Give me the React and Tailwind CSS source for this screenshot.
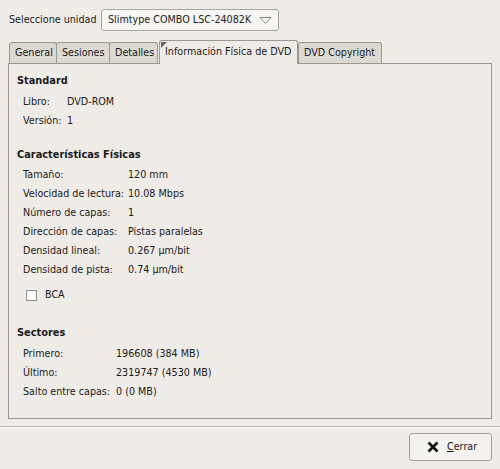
import React from "react";

const font = { fontFamily: '"DejaVu Sans", Verdana, sans-serif' };

function Row({ label, value, valueX, h = "h-[19px]" }) {
  return (
    <div className={`flex items-center ${h} pl-[6px] whitespace-nowrap`}>
      <span className="shrink-0" style={{ width: valueX }}>{label}</span>
      <span>{value}</span>
    </div>
  );
}

function Tab({ children, active, w }) {
  if (active) {
    return (
      <div className="relative z-10 -mb-px h-[24px] border border-b-0 border-[#9a9893] bg-[#efebe7] px-[5px] pt-[4px] rounded-t-[3px] ml-[2px] whitespace-nowrap" style={{ width: w }}>
        <span className="absolute left-[1px] top-[1px] h-0 w-0 border-l-[3px] border-t-[3px] border-l-[#666] border-t-[#666] border-r-[3px] border-b-[3px]" style={{ borderRightColor: "transparent", borderBottomColor: "transparent" }} />
        {children}
      </div>
    );
  }
  return (
    <div className="h-[21px] border border-b-0 border-[#9a9893] bg-[#dcd9d3] px-[5px] pt-[3px] rounded-t-[3px] -mr-px whitespace-nowrap" style={{ width: w }}>
      {children}
    </div>
  );
}

export default function App() {
  return (
    <div className="w-[500px] h-[469px] bg-[#efebe7] text-[9.6px] text-[#1a1a1a] flex flex-col" style={font}>
      <div className="flex items-center pl-[9px] pt-[9px] h-[31px] whitespace-nowrap">
        <span className="w-[92px]">Seleccione unidad</span>
        <div className="flex items-center justify-between w-[178px] h-[22px] rounded-[3px] border border-[#a7a5a0] bg-[#f7f6f4] pl-[6px] pr-[6px]">
          <span>Slimtype COMBO LSC-24082K</span>
          <svg width="13" height="9" viewBox="0 0 13 9">
            <path d="M1 1.5 L12 1.5 L6.5 7.5 Z" fill="none" stroke="#8a8884" strokeWidth="1" />
          </svg>
        </div>
      </div>
      <div className="flex items-end pl-[9px] mt-[8px] h-[24px]">
        <Tab w={48}>General</Tab>
        <Tab w={54}>Sesiones</Tab>
        <Tab w={49}>Detalles</Tab>
        <Tab active w={139}>Información Física de DVD</Tab>
        <Tab w={84}>DVD Copyright</Tab>
      </div>
      <div className="mx-[8px] h-[356px] border border-[#9a9893] px-[8px] pt-[10px]">
        <div className="font-bold text-[9.8px] h-[14px] flex items-center">Standard</div>
        <div className="mt-[5px]">
          <Row label="Libro:" value="DVD-ROM" valueX={44} />
          <Row label="Versión:" value="1" valueX={44} />
        </div>
        <div className="font-bold text-[9.8px] h-[14px] flex items-center mt-[17px]">Características Físicas</div>
        <div className="mt-[4px]">
          <Row label="Tamaño:" value="120 mm" valueX={105} />
          <Row label="Velocidad de lectura:" value="10.08 Mbps" valueX={105} />
          <Row label="Número de capas:" value="1" valueX={105} />
          <Row label="Dirección de capas:" value="Pistas paralelas" valueX={105} />
          <Row label="Densidad lineal:" value="0.267 µm/bit" valueX={105} />
          <Row label="Densidad de pista:" value="0.74 µm/bit" valueX={105} />
        </div>
        <div className="flex items-center h-[18px] mt-[6px] pl-[9px]">
          <span className="w-[11px] h-[11px] border border-[#8f8d88] bg-[#fbfaf9]" />
          <span className="ml-[8px]">BCA</span>
        </div>
        <div className="font-bold text-[9.8px] h-[14px] flex items-center mt-[22px]">Sectores</div>
        <div className="mt-[5px]">
          <Row label="Primero:" value="196608 (384 MB)" valueX={93} />
          <Row label="Último:" value="2319747 (4530 MB)" valueX={93} />
          <Row label="Salto entre capas:" value="0 (0 MB)" valueX={93} />
        </div>
      </div>
      <div className="mt-[7px] h-px bg-[#b9b6b0]" />
      <div className="h-px bg-[#fbfaf8]" />
      <div className="flex justify-end pr-[8px] mt-[5px]">
        <div className="flex items-center w-[83px] h-[28px] rounded-[3px] border border-[#a19f9a] bg-[#f4f2ef] pl-[17px]">
          <svg width="12" height="12" viewBox="0 0 12 12">
            <path d="M1.5 1.5 L10.5 10.5 M10.5 1.5 L1.5 10.5" stroke="#111" strokeWidth="2.6" strokeLinecap="butt" />
          </svg>
          <span className="ml-[8px]"><span className="underline">C</span>errar</span>
        </div>
      </div>
    </div>
  );
}
